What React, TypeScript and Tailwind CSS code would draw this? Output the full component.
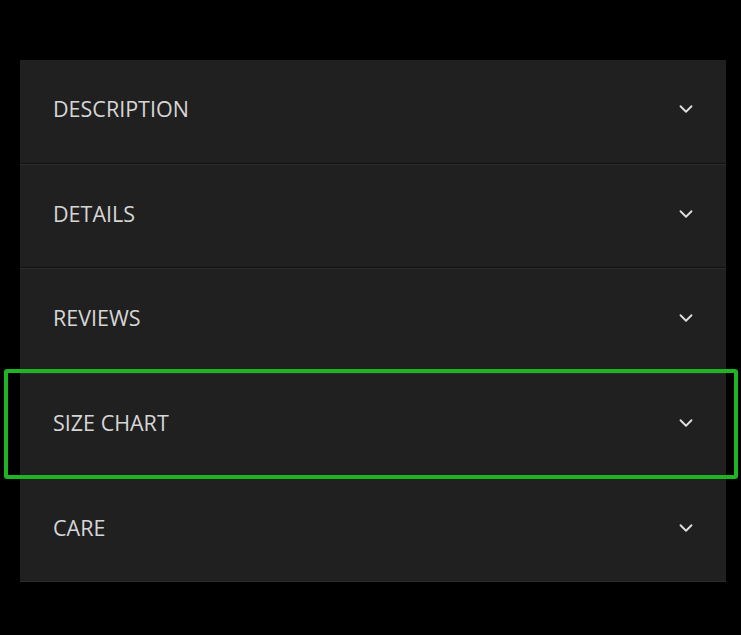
import { ChevronDown } from 'lucide-react';

const sections = ['DESCRIPTION', 'DETAILS', 'REVIEWS', 'SIZE CHART', 'CARE'];

export default function App() {
  return (
    <div className="min-h-screen bg-black pt-[60px] px-[20px] font-['Open_Sans',sans-serif]">
      <div className="w-[706px] bg-[#202020]">
        {sections.map((label, i) => (
          <div key={label} className="relative">
            <button className="flex h-[102.6px] w-full items-center justify-between pb-[4px] pl-[33px] pr-[29px] text-left">
              <span className="text-[21.5px] text-[#d6d6d6]">{label}</span>
              <ChevronDown size={22} strokeWidth={2} className="text-[#e0e0e0]" />
            </button>
            {i < sections.length - 1 && <div className="h-px bg-[#111111]" />}
            <div className="h-px bg-[#2c2c2c]" />
            {label === 'SIZE CHART' && (
              <div className="pointer-events-none absolute -left-[16px] -right-[12px] -top-[5px] -bottom-[1px] rounded-[3px] border-[4px] border-[#1db523]" />
            )}
          </div>
        ))}
      </div>
    </div>
  );
}
